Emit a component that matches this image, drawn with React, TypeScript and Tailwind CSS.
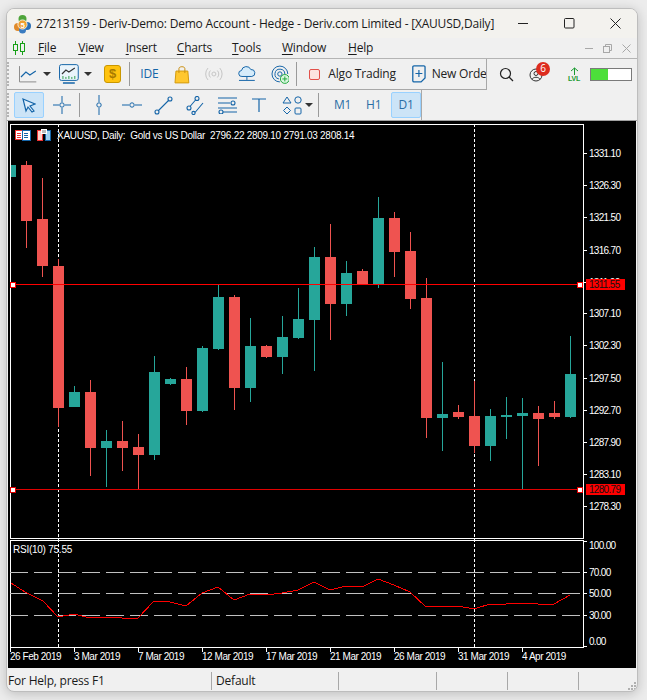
const BLUE = "#1565a8";
const RED = "#ef5350";
const TEAL = "#26a69a";

// [teal?, high, bodyTop, bodyBottom, low] in px, one per bar, 16px apart
const bars: [number, number, number, number, number][] = [
  [1, 165, 165, 177, 177],
  [0, 161, 165, 221, 248],
  [0, 178, 219, 266, 277],
  [0, 259, 266, 408, 427],
  [1, 386, 392, 407, 407],
  [0, 380, 392, 448, 476],
  [1, 430, 441, 448, 487],
  [0, 421, 441, 448, 471],
  [0, 434, 447, 455, 489],
  [1, 356, 372, 455, 460],
  [1, 378, 379, 384, 385],
  [0, 367, 379, 411, 425],
  [1, 346, 348, 411, 412],
  [1, 285, 297, 349, 350],
  [0, 295, 297, 388, 410],
  [1, 318, 346, 388, 402],
  [0, 345, 346, 357, 358],
  [1, 316, 337, 357, 374],
  [1, 288, 319, 338, 339],
  [1, 247, 257, 320, 371],
  [0, 224, 257, 304, 340],
  [1, 261, 273, 304, 316],
  [0, 269, 271, 284, 284],
  [1, 197, 218, 284, 288],
  [0, 212, 218, 252, 277],
  [0, 232, 251, 299, 309],
  [0, 278, 298, 418, 438],
  [1, 362, 414, 418, 451],
  [0, 405, 412, 417, 419],
  [0, 381, 416, 446, 453],
  [1, 409, 416, 446, 461],
  [1, 397, 415, 417, 439],
  [1, 398, 413, 416, 489],
  [0, 406, 413, 419, 466],
  [0, 401, 413, 417, 419],
  [1, 336, 374, 417, 418],
];

const priceTicks: [string, number][] = [
  ["1331.10", 153], ["1326.30", 185], ["1321.50", 217], ["1316.70", 250],
  ["1311.90", 282], ["1307.10", 313], ["1302.30", 345], ["1297.50", 378],
  ["1292.70", 410], ["1287.90", 442], ["1283.10", 474], ["1278.30", 506],
];
const rsiTicks: [string, number][] = [
  ["100.00", 545], ["70.00", 572], ["50.00", 593], ["30.00", 615], ["0.00", 641],
];
const dates: [string, number][] = [
  ["26 Feb 2019", 10], ["3 Mar 2019", 74], ["7 Mar 2019", 138], ["12 Mar 2019", 202],
  ["17 Mar 2019", 266], ["21 Mar 2019", 330], ["26 Mar 2019", 394], ["31 Mar 2019", 458],
  ["4 Apr 2019", 522],
];
const rsi =
  "11,583 25,592 43,601 58,617 74,614 90,618 106,617 122,618 138,618 154,601 170,602 186,606 202,593 218,587 234,600 250,594 266,595 282,593 298,590 314,582 330,590 346,586 362,587 378,579 394,585 410,592 426,607 442,606 458,606 474,609 490,604 506,604 522,603 538,604 554,604 570,595";

const axisFont = { fontFamily: "'Liberation Sans', sans-serif", fontSize: 10 };

function Chart() {
  return (
    <svg width="628" height="547" viewBox="8 121 628 547" className="block">
      <rect x="8" y="121" width="628" height="547" fill="#000" />
      {/* frames */}
      <g fill="none" stroke="#fff" shapeRendering="crispEdges">
        <rect x="10.5" y="124.5" width="573" height="414" />
        <rect x="10.5" y="540.5" width="573" height="107" />
      </g>

      {/* crosshair verticals */}
      <g stroke="#fff" strokeDasharray="3 2" shapeRendering="crispEdges">
        <line x1="58.5" y1="124" x2="58.5" y2="647" />
        <line x1="474.5" y1="124" x2="474.5" y2="647" />
      </g>

      {bars.map(([teal, high, top, bottom, low], i) => {
        const x = 10 + i * 16;
        const color = teal ? TEAL : RED;
        return (
          <g key={i} fill={color} shapeRendering="crispEdges">
            {i > 0 && <rect x={x} y={high} width="1" height={low - high} />}
            <rect x={i === 0 ? 11 : x - 5} y={top} width={i === 0 ? 5 : 11} height={bottom - top} />
          </g>
        );
      })}

      {/* price lines */}
      <g shapeRendering="crispEdges">
        <rect x="11" y="284" width="572" height="1" fill="#ff0000" />
        <rect x="11" y="489" width="572" height="1" fill="#e00000" />
        {[13, 580].map((x) => (
          <g key={x}>
            <rect x={x - 2.5} y="282" width="5" height="5" fill="#fff" stroke="#ff0000" />
            <rect x={x - 2.5} y="487" width="5" height="5" fill="#fff" stroke="#e00000" />
          </g>
        ))}
      </g>

      {/* chart corner icons */}
      <g shapeRendering="crispEdges">
        <rect x="15.5" y="130.5" width="14" height="9" fill="#fff" stroke="#e33" />
        <rect x="22" y="130" width="8" height="10" fill="#fff" stroke="#1565a8" />
        <path d="M17 133h4M17 135h4M17 137h4" stroke="#e33" />
        <path d="M24 133h4M24 135h4M24 137h4" stroke="#1565a8" />
        <path d="M37 130h5v10h-5z" fill="#ffd0c8" stroke="#e33" />
        <path d="M45 130h5v10h-5z" fill="#9fd0f0" stroke="#1565a8" />
        <rect x="41" y="129" width="5" height="4" fill="#bbb" stroke="#fff" />
      </g>

      <g fill="#fff" {...axisFont}>
        <text x="57" y="139" xmlSpace="preserve" letterSpacing="-0.28">XAUUSD, Daily:  Gold vs US Dollar  2796.22 2809.10 2791.03 2808.14</text>
        <text x="13" y="553" letterSpacing="-0.25">RSI(10) 75.55</text>
      </g>

      {/* price axis */}
      <g stroke="#fff" shapeRendering="crispEdges">
        {priceTicks.map(([, y]) => (
          <line key={y} x1="584" x2="587" y1={y + 0.5} y2={y + 0.5} />
        ))}
        {rsiTicks.map(([, y]) => (
          <line key={y} x1="584" x2="587" y1={y === 545 ? 541.5 : y === 641 ? 646.5 : y + 0.5} y2={y === 545 ? 541.5 : y === 641 ? 646.5 : y + 0.5} />
        ))}
        {dates.map(([, x]) => (
          <line key={x} x1={x + 0.5} x2={x + 0.5} y1="648" y2="652" />
        ))}
      </g>
      <g fill="#fff" {...axisFont}>
        {priceTicks.map(([label, y]) => (
          <text key={label} x="589" y={y + 4} letterSpacing="-0.7">{label}</text>
        ))}
        {rsiTicks.map(([label, y]) => (
          <text key={label} x="589" y={y + 4} letterSpacing="-0.7">{label}</text>
        ))}
        {dates.map(([label, x]) => (
          <text key={label} x={x} y="660" letterSpacing="-0.45">{label}</text>
        ))}
      </g>

      {/* order labels */}
      <g {...axisFont} letterSpacing="-0.7">
        <rect x="586" y="279" width="39" height="11" fill="#ff0000" />
        <text x="589" y="288" fill="#111">1311.55</text>
        <rect x="586" y="484" width="39" height="11" fill="#ff0000" />
        <text x="589" y="493" fill="#111">1280.79</text>
      </g>

      {/* RSI */}
      <g stroke="#c0c0c0" strokeDasharray="18 6" shapeRendering="crispEdges">
        <line x1="10" x2="583" y1="572.5" y2="572.5" />
        <line x1="10" x2="583" y1="593.5" y2="593.5" />
        <line x1="10" x2="583" y1="615.5" y2="615.5" />
      </g>
      <polyline points={rsi} fill="none" stroke="#ff0000" strokeWidth="1" shapeRendering="crispEdges" />
    </svg>
  );
}

function Grip() {
  return <div className="h-[24px] w-[2px] border-l-2 border-dotted border-[#b4b4b4]" />;
}

function Sep({ className }: { className: string }) {
  return <div className={`h-[24px] w-px bg-[#9a9a9a] ${className}`} />;
}

function Arrow({ className }: { className: string }) {
  return <div className={`h-0 w-0 border-x-[4px] border-t-[4px] border-x-transparent border-t-[#333] ${className}`} />;
}

function Logo() {
  return (
    <svg width="17" height="20" viewBox="0 0 17 20" className="ml-[7px]">
      <circle cx="8.5" cy="5" r="4" fill="#4fa53a" />
      <circle cx="13" cy="12" r="4" fill="#2a6fb5" />
      <circle cx="4" cy="13" r="4" fill="#e08a2a" />
      <circle cx="8.5" cy="16" r="3.5" fill="#3b7cc0" />
      <circle cx="8.5" cy="10.5" r="4.6" fill="#f0a030" stroke="#fff" strokeWidth="0.8" />
      <text x="8.5" y="13.5" textAnchor="middle" fontSize="8" fontWeight="700" fill="#fff" fontFamily="'Liberation Sans', sans-serif">5</text>
    </svg>
  );
}

function MenuItem({ first, rest, className }: { first: string; rest: string; className: string }) {
  return (
    <span className={className}>
      <span className="underline underline-offset-2">{first}</span>
      {rest}
    </span>
  );
}

function Toolbar1() {
  return (
    <div className="flex h-[31px] w-[480px] items-center border-r border-b border-[#a8a8a8]">
      <Grip />
      <svg width="18" height="18" viewBox="0 0 18 18" fill="none" stroke={BLUE} className="ml-[10px]">
        <path d="M.5 1v16h17" stroke="#8a8a8a" />
        <path d="M2 12l5-5 4 3 6-4" strokeWidth="1.2" />
      </svg>
      <Arrow className="ml-[6px]" />
      <svg width="20" height="20" viewBox="0 0 20 20" fill="none" stroke={BLUE} className="ml-[8px]">
        <rect x=".5" y=".5" width="19" height="16" rx="2" fill="#eaf4fb" />
        <path d="M3 10l4-4 3 2 6-4" strokeWidth="1.2" stroke="#333" />
        <path d="M4 15v-3M7 15v-2M10 15v-3M13 15v-2M16 15v-3" stroke="#2e9e4a" />
        <path d="M4 19h12" strokeWidth="1.5" />
      </svg>
      <Arrow className="ml-[5px]" />
      <div className="ml-[12px] flex h-[18px] w-[18px] items-center justify-center rounded-[3px] border border-[#c99700] bg-[#ffc30f] font-['Liberation_Sans',sans-serif] text-[13px] font-bold text-[#a87a00]">
        $
      </div>
      <Sep className="ml-[8px]" />
      <span className="ml-[10px] w-[18px] text-[12px] text-[#1565a8]">IDE</span>
      <svg width="16" height="19" viewBox="0 0 16 19" className="ml-[16px]">
        <path d="M2 6h12l1 12H1z" fill="#ffc72e" stroke="#d19a10" />
        <path d="M5 8V3.5C5 1 11 1 11 3.5V8" fill="none" stroke="#c98f10" />
      </svg>
      <svg width="18" height="14" viewBox="0 0 18 14" fill="none" stroke="#c4c4c4" className="ml-[15px]">
        <circle cx="9" cy="7" r="2" />
        <path d="M5.5 3.5a5 5 0 0 0 0 7M12.5 3.5a5 5 0 0 1 0 7M3 1a9 9 0 0 0 0 12M15 1a9 9 0 0 1 0 12" />
      </svg>
      <svg width="18" height="18" viewBox="0 0 18 18" fill="none" stroke={BLUE} className="ml-[15px]">
        <path d="M4 11.5a3 3 0 0 1-.5-6A5 5 0 0 1 13 4.5a3.5 3.5 0 0 1 1 7z" fill="#d6ecfa" />
        <path d="M9 11.5V15M1 15.5h16" />
      </svg>
      <svg width="19" height="19" viewBox="0 0 19 19" fill="none" stroke={BLUE} className="ml-[15px]">
        <path d="M9 17A8 8 0 1 1 17 9" />
        <path d="M8 14a5 5 0 1 1 6-5" />
        <circle cx="9" cy="9" r="2.2" />
        <circle cx="14" cy="14" r="4.5" fill="#d9f7df" stroke="#1fa83c" />
        <path d="M14 11.5v5M11.5 14h5" stroke="#1fa83c" />
      </svg>
      <Sep className="ml-[7px]" />
      <div className="ml-[12px] h-[11px] w-[11px] rounded-[2px] border border-[#e2504a] bg-[#fde3df]" />
      <span className="ml-[8px] whitespace-nowrap text-[12px] text-[#222]">Algo Trading</span>
      <svg width="14" height="18" viewBox="0 0 14 18" fill="none" stroke={BLUE} className="ml-[16px]">
        <path d="M2 .8h10a1.2 1.2 0 0 1 1.2 1.2v11l-4 4H2A1.2 1.2 0 0 1 .8 16V2A1.2 1.2 0 0 1 2 .8z" strokeWidth="1.3" />
        <path d="M7 5v7M3.5 8.5h7" strokeWidth="1.2" />
      </svg>
      <span className="ml-[6px] w-[55px] overflow-hidden whitespace-nowrap text-[12px] text-[#222]">New Order</span>
    </div>
  );
}

function Toolbar1Right() {
  return (
    <div className="flex flex-1 items-center">
      <svg width="15" height="15" viewBox="0 0 15 15" fill="none" stroke="#222" strokeWidth="1.2" className="ml-[12px]">
        <circle cx="6.5" cy="6.5" r="5" />
        <path d="M10 10l4 4" />
      </svg>
      <div className="relative ml-[15px] h-[14px] w-[14px]">
        <svg width="14" height="14" viewBox="0 0 14 14" fill="none" stroke="#333">
          <circle cx="7" cy="7" r="6" />
          <circle cx="7" cy="5.5" r="2" />
          <path d="M3 11.5c1-3 7-3 8 0" />
        </svg>
        <div className="absolute top-[-6px] left-[7px] flex h-[14px] w-[14px] items-center justify-center rounded-full bg-[#dd2c1f] text-[10px] text-white">
          6
        </div>
      </div>
      <div className="ml-[24px] flex w-[14px] flex-col items-center font-['Liberation_Sans',sans-serif] text-[7px] font-bold leading-[8px] text-[#1a9a30]">
        <svg width="9" height="8" viewBox="0 0 9 8" fill="none" stroke="#1a9a30">
          <path d="M4.5 8V1M1 4l3.5-3L8 4" />
        </svg>
        LVL
      </div>
      <div className="ml-[9px] flex h-[13px] w-[42px] border border-[#7a7a7a] bg-white">
        <div className="h-full w-[17px] bg-[#4cdf3a]" />
      </div>
    </div>
  );
}

function Toolbar2() {
  const line = { fill: "none", stroke: BLUE };
  return (
    <div className="flex h-[30px] w-[415px] items-center border-r border-[#a8a8a8] text-[12px] text-[#2a6ea5]">
      <Grip />
      <div className="ml-[5px] flex h-[26px] w-[30px] items-center justify-center rounded-[2px] border border-[#99d1ff] bg-[#cce4f7]">
        <svg width="14" height="15" viewBox="0 0 14 15" {...line} strokeWidth="1.2">
          <path d="M1 1l12 5-5 2 4 5-2 1-4-5-2 4z" fill="#dfeefa" />
        </svg>
      </div>
      <svg width="18" height="18" viewBox="0 0 18 18" {...line} className="ml-[9px]">
        <path d="M9 0v6M9 12v6M0 9h6M12 9h6" />
        <circle cx="9" cy="9" r="2.2" />
      </svg>
      <Sep className="ml-[8px]" />
      <svg width="6" height="20" viewBox="0 0 6 20" {...line} className="ml-[16px]">
        <path d="M3 0v7M3 13v7" />
        <circle cx="3" cy="10" r="2.2" />
      </svg>
      <svg width="20" height="6" viewBox="0 0 20 6" {...line} className="ml-[20px]">
        <path d="M0 3h7M13 3h7" />
        <circle cx="10" cy="3" r="2.2" />
      </svg>
      <svg width="19" height="19" viewBox="0 0 19 19" {...line} strokeWidth="1.1" className="ml-[12px]">
        <path d="M4 15L15 4" />
        <circle cx="3" cy="16" r="2" />
        <circle cx="16" cy="3" r="2" />
      </svg>
      <svg width="19" height="19" viewBox="0 0 19 19" {...line} strokeWidth="1.1" className="ml-[13px]">
        <path d="M4 10.5L9.5 4M9 16.5L17 7" />
        <circle cx="3" cy="12" r="2" />
        <circle cx="11" cy="2.5" r="2" />
        <circle cx="7.5" cy="17" r="1.6" />
      </svg>
      <svg width="19" height="18" viewBox="0 0 19 18" {...line} strokeWidth="1.1" className="ml-[13px]">
        <path d="M0 2h19M0 7h12M0 12h19M5 16h14" />
        <circle cx="15" cy="7" r="2" fill="#f0f0f0" />
        <circle cx="3" cy="16" r="2" fill="#f0f0f0" />
      </svg>
      <svg width="14" height="14" viewBox="0 0 14 14" {...line} strokeWidth="1.2" className="ml-[15px]">
        <path d="M0 1h14M7 1v13" />
      </svg>
      <svg width="23" height="19" viewBox="0 0 23 19" {...line} className="ml-[15px]">
        <path d="M6 1l4 6H2z" />
        <circle cx="17" cy="4" r="3.2" />
        <path d="M6 11l3.5 3.5L6 18l-3.5-3.5z" />
        <rect x="14" y="12" width="6" height="6" rx="1" />
      </svg>
      <Arrow className="ml-[1px]" />
      <Sep className="ml-[5px]" />
      <span className="ml-[15px] w-[17px]">M1</span>
      <span className="ml-[15px] w-[16px]">H1</span>
      <div className="ml-[9px] flex h-[26px] w-[30px] items-center justify-center rounded-[2px] border border-[#99d1ff] bg-[#cce4f7]">
        D1
      </div>
    </div>
  );
}

export default function App() {
  return (
    <div className="h-[700px] w-[647px] overflow-hidden bg-[#ececec] pt-[8px] pl-[6px] font-['Open_Sans',sans-serif] tracking-[-0.2px]">
      <div className="flex h-[684px] w-[632px] flex-col overflow-hidden rounded-[8px] border border-[#bdbdbd] bg-[#f0f0f0] shadow-[0_2px_12px_rgba(0,0,0,0.2)]">
        {/* title bar */}
        <div className="flex h-[29px] shrink-0 items-center bg-[#f3f2ee] text-[#1a1a1a]">
          <Logo />
          <span className="ml-[5px] whitespace-nowrap text-[12px]">
            27213159 - Deriv-Demo: Demo Account - Hedge - Deriv.com Limited - [XAUUSD,Daily]
          </span>
          <svg width="11" height="11" viewBox="0 0 11 11" fill="none" stroke="#222" className="ml-auto">
            <path d="M0 5.5h10" />
          </svg>
          <svg width="11" height="11" viewBox="0 0 11 11" fill="none" stroke="#222" className="ml-[35px]">
            <rect x=".5" y=".5" width="9.5" height="9.5" rx="1" />
          </svg>
          <svg width="11" height="11" viewBox="0 0 11 11" fill="none" stroke="#222" className="mr-[16px] ml-[35px]">
            <path d="M.5.5l10 10M10.5.5l-10 10" />
          </svg>
        </div>

        {/* menu bar */}
        <div className="flex h-[21px] shrink-0 items-center border-b border-[#b4b4b4] text-[12px] text-[#1a1a1a]">
          <svg width="12" height="14" viewBox="0 0 12 14" fill="none" stroke="#18a018" className="ml-[6px]">
            <path d="M2.5 0v14M9.5 0v14" />
            <rect x=".5" y="3.5" width="4" height="6" fill="#f0f0f0" />
            <rect x="7.5" y="2.5" width="4" height="8" fill="#f0f0f0" />
          </svg>
          <MenuItem first="F" rest="ile" className="ml-[13px]" />
          <MenuItem first="V" rest="iew" className="ml-[22px]" />
          <MenuItem first="I" rest="nsert" className="ml-[22px]" />
          <MenuItem first="C" rest="harts" className="ml-[20px]" />
          <MenuItem first="T" rest="ools" className="ml-[20px]" />
          <MenuItem first="W" rest="indow" className="ml-[21px]" />
          <MenuItem first="H" rest="elp" className="ml-[22px]" />
          <svg width="9" height="9" viewBox="0 0 9 9" fill="none" stroke="#a8a8a8" className="ml-auto">
            <path d="M0 4.5h8" />
          </svg>
          <svg width="9" height="9" viewBox="0 0 9 9" fill="none" stroke="#a8a8a8" className="ml-[9px]">
            <rect x=".5" y="2.5" width="6" height="6" />
            <path d="M2.5 2.5v-2h6v6h-2" />
          </svg>
          <svg width="9" height="9" viewBox="0 0 9 9" fill="none" stroke="#a8a8a8" className="mr-[6px] ml-[10px]">
            <path d="M.5.5l8 8M8.5.5l-8 8" />
          </svg>
        </div>

        {/* toolbars */}
        <div className="flex shrink-0 items-center">
          <Toolbar1 />
          <Toolbar1Right />
        </div>
        <Toolbar2 />

        {/* chart */}
        <div className="h-[548px] shrink-0 border-t border-[#a0a0a0] pl-px">
          <Chart />
        </div>

        {/* status bar */}
        <div className="flex min-h-0 flex-1 items-center pt-[3px] text-[12px] text-[#1a1a1a]">
          <span className="ml-px w-[203px] whitespace-nowrap">For Help, press F1</span>
          <div className="h-[18px] w-px bg-[#a8a8a8]" />
          <span className="ml-[4px] w-[122px]">Default</span>
          <div className="h-[18px] w-px bg-[#a8a8a8]" />
          <div className="ml-[97px] h-[18px] w-px bg-[#a8a8a8]" />
          <div className="ml-[70px] h-[18px] w-px bg-[#a8a8a8]" />
          <div className="ml-[70px] h-[18px] w-px bg-[#a8a8a8]" />
          <svg width="9" height="9" viewBox="0 0 9 9" fill="#b0b0b0" className="ml-auto self-end">
            <path d="M6 0h2v2H6zM3 3h2v2H3zM6 3h2v2H6zM0 6h2v2H0zM3 6h2v2H3zM6 6h2v2H6z" />
          </svg>
        </div>
      </div>
    </div>
  );
}
